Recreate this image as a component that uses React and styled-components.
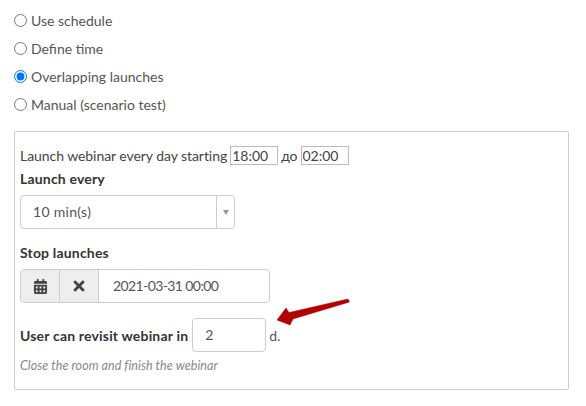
import React from 'react';
import styled, { createGlobalStyle } from 'styled-components';
import { FaCalendarAlt, FaTimes } from 'react-icons/fa';

const GlobalStyle = createGlobalStyle`
  html, body {
    margin: 0;
    background: #fff;
  }
  body {
    font-family: Lato, "Liberation Sans", sans-serif;
    font-size: 14px;
    color: #333;
  }
`;

const Page = styled.div`
  width: 586px;
  height: 406px;
  overflow: hidden;
  padding: 6px 17px 0 14px;
  box-sizing: border-box;
`;

const RadioList = styled.div`
  display: flex;
  flex-direction: column;
`;

const RadioRow = styled.label`
  display: flex;
  align-items: center;
  gap: 4px;
  height: 28px;
  color: #555;
`;

const Radio = styled.input.attrs({ type: 'radio', name: 'launch' })`
  width: 13px;
  height: 13px;
  margin: 0;
`;

const Panel = styled.div`
  position: relative;
  margin-top: 13px;
  height: 259px;
  box-sizing: border-box;
  border: 1px solid #ccc;
  border-radius: 2px;
  padding: 13px 5px 0;
`;

const TimeRow = styled.div`
  display: flex;
  align-items: center;
  gap: 3px;
  height: 20px;
  color: #444;
  letter-spacing: -0.06px;
`;

const TimeInput = styled.input`
  width: 48px;
  height: 19px;
  box-sizing: border-box;
  border: 1px solid #bbb;
  padding: 0 1px;
  font: inherit;
  color: #444;
`;

const Label = styled.div`
  font-weight: 700;
  color: #333;
  line-height: 20px;
  letter-spacing: 0.18px;
  margin-top: ${(p) => p.$top}px;
  margin-bottom: 6px;
`;

const Select = styled.div`
  display: flex;
  width: 215px;
  height: 34px;
  box-sizing: border-box;
  border: 1px solid #ccc;
  border-radius: 4px;
  color: #555;
`;

const SelectValue = styled.div`
  flex: 1;
  padding-left: 12px;
  line-height: 32px;
  letter-spacing: 0.3px;
`;

const SelectArrow = styled.div`
  width: 17px;
  border-left: 1px solid #ccc;
  display: flex;
  align-items: center;
  justify-content: center;
  &::after {
    content: '';
    border-left: 3px solid transparent;
    border-right: 3px solid transparent;
    border-top: 5px solid #999;
  }
`;

const DateGroup = styled.div`
  display: flex;
  width: 250px;
  height: 34px;
  box-sizing: border-box;
  border: 1px solid #ccc;
  border-radius: 4px;
  overflow: hidden;
`;

const GroupButton = styled.div`
  width: 39px;
  box-sizing: border-box;
  flex: none;
  display: flex;
  align-items: center;
  justify-content: center;
  background: #eee;
  border-right: 1px solid #ccc;
  color: #444;
  font-size: ${(p) => p.$size}px;
`;

const DateValue = styled.div`
  flex: 1;
  padding-left: 14px;
  line-height: 32px;
  color: #555;
  letter-spacing: -0.6px;
`;

const RevisitRow = styled.div`
  display: flex;
  align-items: center;
  margin-top: 15px;
  color: #555;
`;

const RevisitLabel = styled.span`
  font-weight: 700;
  color: #333;
  margin-right: 4px;
  letter-spacing: 0.18px;
`;

const NumberBox = styled.div`
  width: 74px;
  height: 34px;
  box-sizing: border-box;
  border: 1px solid #ccc;
  border-radius: 4px;
  padding-left: 12px;
  line-height: 32px;
  margin-right: 3px;
`;

const Hint = styled.div`
  margin-top: 5px;
  font-size: 12.5px;
  font-style: italic;
  color: #888;
  line-height: 17px;
  letter-spacing: 0.06px;
`;

const Arrow = styled.svg`
  position: absolute;
  left: 258px;
  top: 165px;
`;

const options = ['Use schedule', 'Define time', 'Overlapping launches', 'Manual (scenario test)'];

const App = () => {
  return (
    <Page>
      <GlobalStyle />
      <RadioList>
        {options.map((o, i) => (
          <RadioRow key={o}>
            <Radio defaultChecked={i === 2} />
            {o}
          </RadioRow>
        ))}
      </RadioList>
      <Panel>
        <TimeRow>
          Launch webinar every day starting
          <TimeInput defaultValue="18:00" />
          до
          <TimeInput defaultValue="02:00" />
        </TimeRow>
        <Label $top={4}>Launch every</Label>
        <Select>
          <SelectValue>10 min(s)</SelectValue>
          <SelectArrow />
        </Select>
        <Label $top={14}>Stop launches</Label>
        <DateGroup>
          <GroupButton $size={15}><FaCalendarAlt /></GroupButton>
          <GroupButton $size={16}><FaTimes /></GroupButton>
          <DateValue>2021-03-31 00:00</DateValue>
        </DateGroup>
        <RevisitRow>
          <RevisitLabel>User can revisit webinar in</RevisitLabel>
          <NumberBox>2</NumberBox>
          d.
        </RevisitRow>
        <Hint>Close the room and finish the webinar</Hint>
        <Arrow width="80" height="32" viewBox="0 0 80 32">
          <path d="M4 23 L13 11 L16 15.5 L75 2 L76.5 5 L20 22 L17 28 Z" fill="#b30000" stroke="#b30000" strokeWidth="0.5" strokeLinejoin="round" />
        </Arrow>
      </Panel>
    </Page>
  );
};

export default App;
